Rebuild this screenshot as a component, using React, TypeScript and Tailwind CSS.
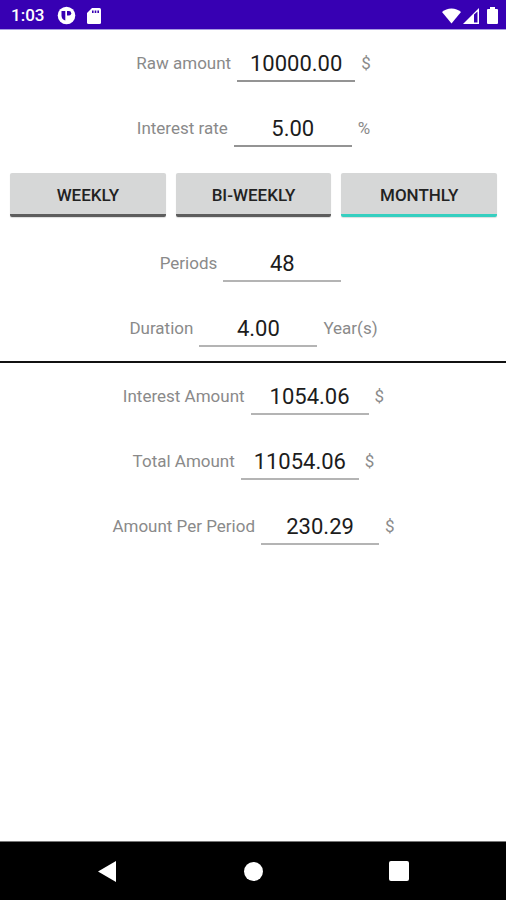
import { useState } from "react";

type FieldProps = {
  id: string;
  label: string;
  value: string;
  unit?: string;
  line?: string;
  readOnly?: boolean;
};

function Field({ id, label, value, unit, line = "border-[#b4b4b4]", readOnly }: FieldProps) {
  return (
    <div className="flex h-[65px] items-center justify-center gap-[6px] pl-px text-[17px] font-normal text-[#8a8a8a]">
      <label htmlFor={id}>{label}</label>
      <input
        id={id}
        type="text"
        inputMode="decimal"
        defaultValue={value}
        readOnly={readOnly}
        className={`h-9 w-[118px] border-b-2 bg-transparent pt-px text-center text-[22px] text-[#1c1c1c] outline-none ${line}`}
      />
      <span>{unit}</span>
    </div>
  );
}

const frequencies = ["Weekly", "Bi-weekly", "Monthly"];

function StatusBar() {
  return (
    <header className="flex h-[30px] items-center justify-between border-b border-[#a79be0] bg-[#3700b3] pt-[2px] pr-2 pl-[11px] text-white">
      <div className="flex items-center">
        <span className="w-[46px] text-[17px] font-medium">1:03</span>
        <svg className="h-[19px] w-[19px]" viewBox="0 0 19 19" aria-hidden="true">
          <circle cx="9.5" cy="9.5" r="8.8" fill="#fff" />
          <path d="M4.500 5h3.800v9.500q-3.800-1-3.800-5z" fill="#3700b3" />
          <path d="M10 5h2a2.200 2.200 0 0 1 0 4.400h-2z" fill="#3700b3" />
        </svg>
        <svg className="ml-[11px] h-4 w-[14px]" viewBox="0 0 14 16" aria-hidden="true">
          <path d="M5 0h7.500Q14 0 14 1.500v13q0 1.500-1.500 1.500h-11Q0 16 0 14.500V5z" fill="#fff" />
          <path d="M5 2.500h1.600v2.500H5zM7.700 2.500h1.600v2.500H7.700zM10.400 2.500H12v2.500h-1.600z" fill="#3700b3" />
        </svg>
      </div>
      <div className="flex items-center">
        <svg className="h-4 w-[19px]" viewBox="0 0 19 16" aria-hidden="true">
          <path d="M0 4Q4 .5 9.500 .5T19 4L9.500 15.500z" fill="#fff" />
        </svg>
        <svg className="ml-[2px] h-4 w-4" viewBox="0 0 16 16" aria-hidden="true">
          <path fillRule="evenodd" d="M16 0v16H0zM11 6.500v8h3.500v-11z" fill="#fff" />
          <path d="M12.200 7h1v6.500h-1z" fill="#3700b3" />
        </svg>
        <svg className="ml-2 h-[17px] w-[11px]" viewBox="0 0 11 17" aria-hidden="true">
          <path d="M3 0h5v2h2q1 0 1 1v13q0 1-1 1H1q-1 0-1-1V3q0-1 1-1h2z" fill="#fff" />
        </svg>
      </div>
    </header>
  );
}

function NavigationBar() {
  return (
    <nav className="flex h-[59px] items-center justify-center gap-[98px] border-t border-[#777777] bg-black text-white">
      <button type="button" aria-label="Back" className="flex h-12 w-12 items-center justify-center">
        <svg className="h-[21px] w-[18px]" viewBox="0 0 18 21" aria-hidden="true">
          <path d="M18 0v21L0 10.500z" fill="currentColor" />
        </svg>
      </button>
      <button type="button" aria-label="Home" className="flex h-12 w-12 items-center justify-center">
        <span className="h-[19px] w-[19px] rounded-full bg-white" />
      </button>
      <button type="button" aria-label="Recent apps" className="flex h-12 w-12 items-center justify-center">
        <span className="h-5 w-5 rounded-[2px] bg-white" />
      </button>
    </nav>
  );
}

export default function App() {
  const [selected, setSelected] = useState("Monthly");

  return (
    <div className="flex min-h-screen flex-col bg-white font-[Roboto,sans-serif]">
      <StatusBar />
      <main className="flex-1 pt-px">
        <section>
          <Field id="raw" label="Raw amount" value="10000.00" unit="$" line="border-[#949494]" />
          <Field id="rate" label="Interest rate" value="5.00" unit="%" line="border-[#949494]" />
        </section>
        <div className="grid grid-cols-3 gap-[10px] pt-3 pr-[9px] pb-[14px] pl-[10px]">
          {frequencies.map((name) => (
            <button
              key={name}
              type="button"
              aria-pressed={selected === name}
              onClick={() => setSelected(name)}
              className={`h-11 rounded-[2px] border-b-[3px] bg-[#d6d7d7] pt-1 text-[17px] font-medium text-[#222222] uppercase shadow-[0_1px_1px_#dddddd] ${
                selected === name ? "border-[#36cfc0]" : "border-[#5d5d5d]"
              }`}
            >
              {name}
            </button>
          ))}
        </div>
        <section>
          <Field id="periods" label="Periods" value="48" />
          <Field id="duration" label="Duration" value="4.00" unit="Year(s)" />
        </section>
        <hr className="h-[2px] border-0 bg-[#111111]" />
        <section className="pt-px">
          <Field id="interest" label="Interest Amount" value="1054.06" unit="$" readOnly />
          <Field id="total" label="Total Amount" value="11054.06" unit="$" readOnly />
          <Field id="payment" label="Amount Per Period" value="230.29" unit="$" readOnly />
        </section>
      </main>
      <NavigationBar />
    </div>
  );
}
